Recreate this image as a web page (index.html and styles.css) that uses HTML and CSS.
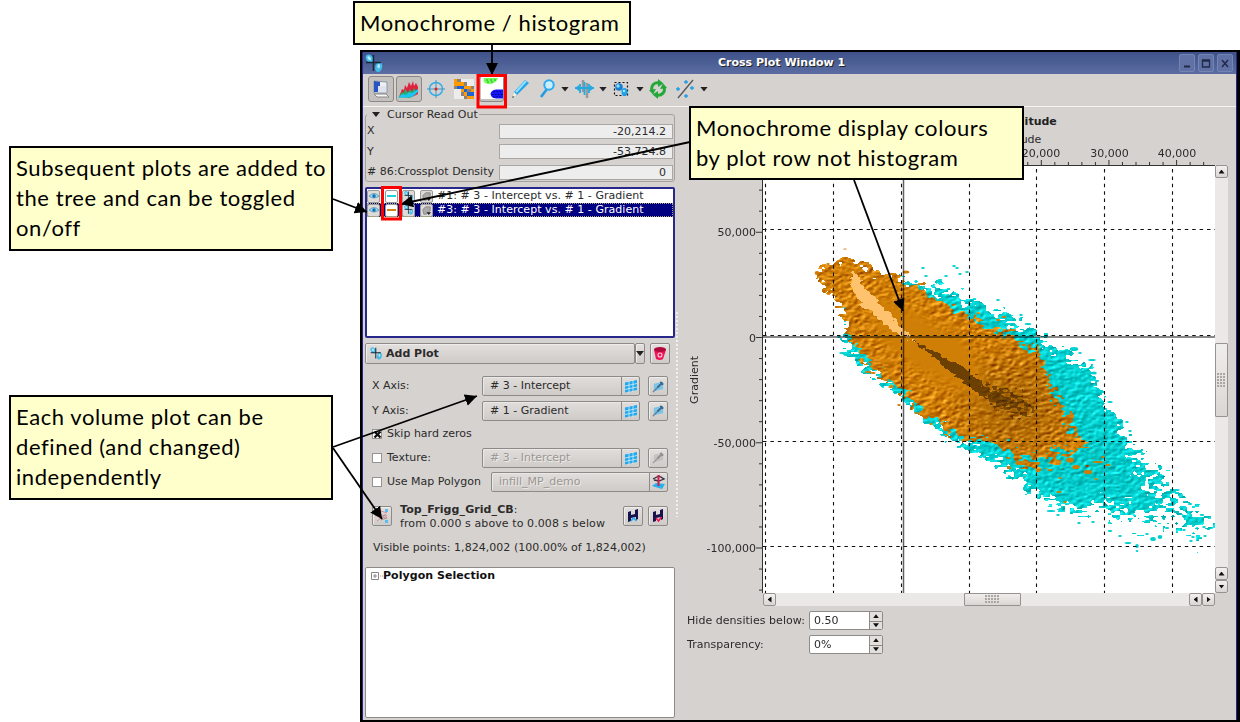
FILE: index.html
```html
<!DOCTYPE html>
<html lang="en">
<head>
<meta charset="utf-8">
<title>Cross Plot Window 1</title>
<link rel="stylesheet" href="styles.css">
</head>
<body>
<svg class="defs" width="0" height="0" aria-hidden="true">
  <symbol id="plotmark" viewBox="0 0 18 18">
    <ellipse cx="4.500" cy="4.500" rx="3.200" ry="4.600" fill="#45b9e8" transform="rotate(-40 4.500 4.500)"/>
    <ellipse cx="13" cy="12.500" rx="3.300" ry="4.800" fill="#45b9e8" transform="rotate(15 13 12.500)"/>
    <ellipse cx="4" cy="4" rx="1.300" ry="2.200" fill="#b8ecff" transform="rotate(-40 4 4)"/>
    <ellipse cx="13" cy="11.500" rx="1.200" ry="2" fill="#b8ecff"/>
    <path d="M8 1v15M1 8h14" stroke="#142838" stroke-width="1.400"/>
  </symbol>
  <symbol id="grid" viewBox="0 0 14 14">
    <path d="M1 3.500 13 1v10L1 13.500z" fill="#20a8f0"/>
    <path d="M5 2v12M9 1v12M1 7l12-2.500M1 10.500l12-2.500" stroke="#d6ecf5" stroke-width=".8"/>
  </symbol>
  <symbol id="edit" viewBox="0 0 14 14">
    <path d="M2 4 12 2v8L2 12z" fill="#7cc4e6"/>
    <path d="M1 13 7 7" stroke="#587890" stroke-width="1.200"/>
    <path d="m6 8 5-5M9 2l3 3" stroke="#38648a" stroke-width="2"/>
  </symbol>
  <symbol id="disk" viewBox="0 0 14 14">
    <path d="M2 3 5 2v4l4-1V1l3-1v10l-2 1V8L5 9v3l-3 1z" fill="#15124f"/>
  </symbol>
  <symbol id="eye" viewBox="0 0 12 10">
    <path d="M1 5q5-5 10 0-5 4-10 0z" fill="#8ed8f8" stroke="#5b93b0" stroke-width=".8"/>
    <circle cx="6" cy="5" r="1.700" fill="#1070b0"/>
  </symbol>
  <symbol id="tag" viewBox="0 0 12 12">
    <path d="m2 5 3-3h5v4l-4 4H3z" fill="#aaa" stroke="#888"/>
    <path d="m6 8h5l-2.500 3z" fill="#222"/>
  </symbol>
</svg>
<main class="slide">
  <section class="window">
    <header class="titlebar">
      <svg class="title-icon" width="19" height="19"><use href="#plotmark"/></svg>
      <h1>Cross Plot Window 1</h1>
      <div class="winbtns">
        <span><svg width="16" height="17"><path d="M5 11.500h6" stroke="#202a48" stroke-width="2"/></svg></span>
        <span><svg width="16" height="17"><path d="M4.500 5h7v7h-7zM4.500 6h7" fill="none" stroke="#202a48" stroke-width="1.300"/></svg></span>
        <span><svg width="16" height="17"><path d="m5 5 6 7M11 5l-6 7" stroke="#202a48" stroke-width="1.500"/></svg></span>
      </div>
    </header>

    <nav class="toolbar">
      <span class="tool pressed"><svg width="24" height="24"><path d="m5 4 13 1v11H5z" fill="#eef0f6" stroke="#8c94a8"/><path d="m5 4 6 1v10H5z" fill="#2854c4"/><path d="M9 9h8v6H9z" fill="#dfe3ee"/><path d="M5 17h12l3 3H8z" fill="#f8f8f8" stroke="#8a8a8a"/></svg></span>
      <span class="tool pressed t2"><svg width="24" height="24"><path d="m2 20 3-8 2 1 1-5 2 3 2-6 2 4 2-5 1 5 2-3 2 4v7l-6 3z" fill="#e0223f"/><path d="m2 20 3-5 2 1 1-4 3 4 2-4 2 3 2-4 2 3v3l-6 4z" fill="#19b76a"/><path d="m1 21 4-4 4 1 3-3 3 1 6-4v3l-6 5z" fill="#1cc4f0"/></svg></span>
      <span class="tool t3"><svg width="20" height="20"><circle cx="10" cy="10" r="6.500" fill="none" stroke="#35aee8" stroke-width="1.500"/><path d="M10 1v18M1 10h18" stroke="#3c96c4" stroke-width="1"/><circle cx="10" cy="10" r="1.500" fill="#e02020"/></svg></span>
      <span class="tool t4"><svg width="20" height="20" viewBox="0 0 6 6" shape-rendering="crispEdges"><path fill="#ececec" d="M0 0h6v6H0z"/><path fill="#8c8078" d="M1 0h1v1H1zM3 1h1v1H3zM5 2h1v1H5zM0 2h1v1H0zM2 4h1v1H2zM4 3h1v1H4zM3 5h1v1H3z"/><path fill="#ff9a00" d="M0 0h1v2H0zM1 1h2v1H1zM3 2h2v1H3zM2 3h1v1H2zM3 4h1v1H3zM4 5h2v1H4zM5 3h1v1H5z"/><path fill="#1d63d8" d="M1 2h2v1H1zM3 3h1v1H3zM4 4h2v1H4z"/></svg></span>
      <span class="tool pressed t5"><svg width="23" height="24"><path fill="#fff" d="M1 0h22v22H1z"/><path d="M4 1h14q-2 6-10 6Q2 6 4 1z" fill="#72ff58"/><path d="M6 3h2m2 0h2m2 0h2M7 5h2m2 0h2" stroke="#28a828"/><path d="M10.500 17q.500-4 5.500-4.500h7v9h-7q-5-.500-5.500-4.500z" fill="#1414ff"/><path d="M13.500 14.500h9M12 17.500h11M13.500 20h9" stroke="#000060" stroke-dasharray="1.300 1.700" stroke-width="1.200"/></svg></span>
      <span class="tool t6"><svg width="18" height="20"><path d="m1 19 2-6L14 1l4 3L6 16z" fill="#26a4e8"/><path d="m5 13 10-11" stroke="#94e0ff" stroke-width="2"/><path d="m1 19 2-6 3 3z" fill="#fff0d8"/><path d="m1 19 1-2 1 1z" fill="#222"/></svg></span>
      <span class="tool t7"><svg width="18" height="20"><path d="M3 18 9 10" stroke="#249be2" stroke-width="2.600"/><circle cx="11" cy="6" r="4.700" fill="#cceefa" stroke="#2caaf0" stroke-width="2"/></svg></span>
      <i class="drop d1"></i>
      <span class="tool t8"><svg width="19" height="20"><path d="M8 1v12M12 4v15" stroke="#999" stroke-width="2.500"/><path d="M0 9h19M5 5v9M14 5v9M9.500 3v13" stroke="#26a9df" stroke-width="1.800"/><path d="m0 9 4-3v6zM19 9l-4-3v6z" fill="#26a9df"/></svg></span>
      <i class="drop d2"></i>
      <span class="tool t9"><svg width="17" height="18"><path d="M1.500 2.500h13v13h-13z" fill="none" stroke="#111" stroke-width="1.200" stroke-dasharray="2 2"/><circle cx="6" cy="7" r="3.800" fill="#1b7fd0"/><circle cx="5" cy="6" r="1.700" fill="#92dcff"/><ellipse cx="11.500" cy="12" rx="3" ry="4" fill="#1fa2ea"/><circle cx="11" cy="11" r="1.200" fill="#a6e7ff"/></svg></span>
      <i class="drop d3"></i>
      <span class="tool t10"><svg width="18" height="20"><path d="M3.500 13C1 7 5 3 10 4M14.500 7c3 6-2 10-7 9" fill="none" stroke="#25a83a" stroke-width="3"/><path d="m0 11 7-1-3 5.500zM18 9l-7 1 3-5.500zM9 0l5.500 4.500L9 8zM9 20l-5.500-4.500L9 12z" fill="#25a83a"/></svg></span>
      <span class="tool t11"><svg width="21" height="20"><path d="M2 19 17 1" stroke="#555" stroke-width="1.300"/><path d="M8 3h4M10 1v4M14 9h4M16 7v4M8 17h4M10 15v4M0 10h4M2 8v4" stroke="#209ce8" stroke-width="1.300"/></svg></span>
      <i class="drop d4"></i>
    </nav>

    <div class="body">
      <section class="side">
        <fieldset class="readout">
          <legend><i class="drop"></i>Cursor Read Out</legend>
          <label>X<output>-20,214.2</output></label>
          <label>Y<output>-53,724.8</output></label>
          <label># 86:Crossplot Density<output>0</output></label>
        </fieldset>

        <ul class="tree">
          <li><b class="chip"><svg width="12" height="10"><use href="#eye"/></svg></b><b class="chip swatch cyan"></b><b class="chip"><svg width="10" height="10"><use href="#plotmark"/></svg></b><b class="chip"><svg width="11" height="11"><use href="#tag"/></svg></b><span>#1: # 3 - Intercept vs. # 1 - Gradient</span></li>
          <li class="selected"><b class="chip"><svg width="12" height="10"><use href="#eye"/></svg></b><b class="chip swatch orange"></b><b class="chip"><svg width="10" height="10"><use href="#plotmark"/></svg></b><b class="chip"><svg width="11" height="11"><use href="#tag"/></svg></b><span>#3: # 3 - Intercept vs. # 1 - Gradient</span></li>
        </ul>

        <div class="addrow">
          <button class="btn add"><svg width="13" height="13"><use href="#plotmark"/></svg>Add Plot</button>
          <button class="btn more"><i class="drop"></i></button>
          <button class="btn trash"><svg width="14" height="15"><path d="m1 4 2 9q4 2 7 0l3-9z" fill="#ee1456"/><ellipse cx="7" cy="3.500" rx="6" ry="2.500" fill="#b00a3c"/><circle cx="7" cy="9" r="2" fill="none" stroke="#ffd0e0" stroke-width="1.100"/></svg></button>
        </div>

        <div class="form">
          <div class="row"><span class="lbl">X Axis:</span><div class="combo"><span># 3 - Intercept</span><i><svg width="14" height="14"><use href="#grid"/></svg></i></div><button class="btn sq"><svg width="13" height="13"><use href="#edit"/></svg></button></div>
          <div class="row"><span class="lbl">Y Axis:</span><div class="combo"><span># 1 - Gradient</span><i><svg width="14" height="14"><use href="#grid"/></svg></i></div><button class="btn sq"><svg width="13" height="13"><use href="#edit"/></svg></button></div>
          <div class="row skip"><i class="check on"><svg width="9" height="9"><path d="m1.500 1.500 6 6M7.500 1.500l-6 6" stroke="#111" stroke-width="2.400"/></svg></i><span>Skip hard zeros</span></div>
          <div class="row texture"><i class="check"></i><span class="lbl2">Texture:</span><div class="combo off"><span># 3 - Intercept</span><i><svg width="14" height="14"><use href="#grid"/></svg></i></div><button class="btn sq gray"><svg width="13" height="13"><use href="#edit"/></svg></button></div>
          <div class="row"><i class="check"></i><span class="lbl2">Use Map Polygon</span><div class="combo off wide"><span>infill_MP_demo</span><i><svg width="16" height="16"><path d="m1 12 4-3 9 1-3 5z" fill="#22b2ef"/><path d="m2 5 6-3 5 3-5 2-5-1" fill="none" stroke="#303040" stroke-width="1.300"/><path d="M7.500 1v11" stroke="#dd1748" stroke-width="2"/></svg></i></div></div>
        </div>

        <div class="horizon">
          <button class="btn sq"><svg width="16" height="16"><path d="m2 4 5-1 6 2M1 8l6-1 6 1M3 13l4-3 6-1" stroke="#e08a94" fill="none"/><path d="m7 10 5-4M7 12l6-2" stroke="#888" stroke-width=".8"/><path d="M11 1h3v3h-3zM11 12h3v3h-3z" fill="#5bbcf4"/></svg></button>
          <p><strong>Top_Frigg_Grid_CB</strong>:<br>from 0.000 s above to 0.008 s below</p>
          <button class="btn sq"><svg width="14" height="14"><use href="#disk"/><path d="m5 12 2.500-3 3 3" stroke="#25aef5" stroke-width="1.600" fill="none"/></svg></button>
          <button class="btn sq"><svg width="14" height="14"><use href="#disk"/><path d="m5 9 2.500 3 3-4" stroke="#ea1550" stroke-width="1.600" fill="none"/></svg></button>
        </div>
        <p class="points">Visible points: 1,824,002 (100.00% of 1,824,002)</p>
        <div class="polygons"><svg width="14" height="9"><path d="M.5.5h7v7h-7zM2 4h4M4 2v4" fill="none" stroke="#888"/><path d="M9 4h4" stroke="#999" stroke-dasharray="1 1"/></svg><strong>Polygon Selection</strong></div>
      </section>
      <div class="grip"></div>

      <section class="plot">
        <div class="plot-head"><strong>Amplitude</strong><span>Amplitude</span></div>
        <div class="plot-grid">
          <div class="ytitle"><span>Gradient</span></div>
          <svg class="chart" width="512" height="446" id="chart"></svg>
          <div class="vscroll"><b class="sb up"></b><b class="thumb"></b><b class="sb up"></b><b class="sb down"></b></div>
          <div class="hscroll"><b class="sb left"></b><b class="thumb"></b><b class="sb left"></b><b class="sb right"></b></div>
        </div>
        <div class="spin"><span>Hide densities below:</span><div class="spinbox">0.50<i><b class="up"></b><b class="down"></b></i></div></div>
        <div class="spin"><span>Transparency:</span><div class="spinbox">0%<i><b class="up"></b><b class="down"></b></i></div></div>
      </section>
    </div>
  </section>

  <svg class="arrows" width="1240" height="722">
    <defs><marker id="head" markerUnits="userSpaceOnUse" markerWidth="14" markerHeight="14" refX="12" refY="6" orient="auto"><path d="M0 0 12 6 0 12z"/></marker></defs>
    <g stroke="#000" stroke-width="1.800" fill="none">
      <path d="M492 44V75" marker-end="url(#head)"/>
      <path d="M690 142 401 204" marker-end="url(#head)"/>
      <path d="M854 180 903 311" marker-end="url(#head)"/>
      <path d="M333 199 367 212" marker-end="url(#head)"/>
      <path d="M333 447 477 396" marker-end="url(#head)"/>
      <path d="M333 448 382 519" marker-end="url(#head)"/>
    </g>
    <g fill="none" stroke="#f00" stroke-width="3"><path d="M478 75.500h27.500v31.500H478z"/><path d="M382.500 187.500h18v31.500h-18z"/></g>
  </svg>
  <aside class="callout c1">Monochrome / histogram</aside>
  <aside class="callout c2">Subsequent plots are added to<br>the tree and can be toggled<br>on/off</aside>
  <aside class="callout c3">Each volume plot can be<br>defined (and changed)<br>independently</aside>
  <aside class="callout c4">Monochrome display colours<br>by plot row not histogram</aside>
</main>
<script src="plot.js"></script>
</body>
</html>
```
FILE: styles.css
```css
* { box-sizing: border-box; }
body { margin: 0; background: #fff; font: 11px/14px "DejaVu Sans", sans-serif; color: #2b2b2b; }
h1, p, ul { margin: 0; padding: 0; }
i, b.chip { font-style: normal; }
svg { display: block; flex: none; }
.defs { position: absolute; }
.slide { position: relative; width: 1240px; height: 722px; overflow: hidden; padding: 50px 0 0 360px; }
.window { width: 880px; height: 672px; border: 2px solid #000; border-right-width: 3px; display: flex; flex-direction: column; background: #d6d2cf; box-shadow: inset 1px 0 #28288c, inset -1px 0 #28288c; padding: 0 1px; }

.titlebar { height: 22px; flex: none; background: linear-gradient(#3e5289, #5b6da2); display: flex; align-items: center; padding: 0 3px 0 2px; }
.titlebar h1 { flex: 1; font-size: 11px; line-height: 20px; color: #fff; text-shadow: 1px 1px #222; padding-left: 334px; white-space: nowrap; }
.winbtns { display: flex; gap: 3px; }
.winbtns span { width: 16px; height: 18px; border: 1px solid #7485b3; border-radius: 2px; background: #6072a5; display: flex; justify-content: center; }

.toolbar { height: 33px; flex: none; display: flex; align-items: center; padding: 0 0 2px 5px; border-bottom: 1px solid #f5f4f3; }
.tool { display: flex; justify-content: center; align-items: center; }
.pressed { width: 26px; height: 26px; border: 1px solid #8c8885; border-radius: 3px; background: #c5c1be; }
.t2 { margin-left: 2px; } .t3 { margin-left: 4px; } .t4 { margin-left: 8px; }
.t5 { margin-left: 5px; width: 25px; } .t6 { margin-left: 7px; } .t7 { margin-left: 9px; }
.drop { width: 8px; height: 5px; background: #222; clip-path: polygon(0 0, 100% 0, 50% 100%); flex: none; }
.d1 { margin-left: 5px; } .t8 { margin-left: 6px; } .d2 { margin-left: 5px; } .t9 { margin-left: 6px; }
.d3 { margin-left: 6px; } .t10 { margin-left: 5px; } .t11 { margin-left: 9px; } .d4 { margin-left: 3px; }

.body { display: flex; flex: 1; min-height: 0; }
.side { width: 310px; margin-left: 2px; padding-top: 1px; display: flex; flex-direction: column; }
.readout { height: 74px; margin: 0; padding: 1px 1px 0; border: 1px solid #a5a19e; border-radius: 3px; min-width: 0; }
.readout legend { display: flex; align-items: center; gap: 7px; padding: 0 1px 0 5px; height: 13px; margin: 0; }
.readout label { display: flex; justify-content: space-between; align-items: center; height: 20.5px; white-space: nowrap; padding-bottom: 2px; }
.readout output { width: 174px; height: 15px; flex: none; border: 1px solid #aaa6a3; background: #ededed; text-align: right; line-height: 14px; padding-right: 6px; }
.tree { height: 151px; margin-top: 5px; border: 2px solid #28288c; padding-top: 0; background: #fff; list-style: none; border-radius: 2px; }
.tree li { height: 14px; display: flex; align-items: center; gap: 4.500px; }
.tree li span { margin-left: 0; white-space: nowrap; letter-spacing: .04px; }
.tree .selected { background: #000080; color: #fff; outline: 1px dotted #a8a870; outline-offset: -1px; }
.chip { width: 13px; height: 13px; flex: none; border: 1px solid #999; border-radius: 2px; background: #dedbd8; display: flex; align-items: center; justify-content: center; }
.swatch { background: #fff; }
.swatch::before { content: ""; width: 9px; height: 2px; background: #1bd5d8; }
.swatch.orange::before { background: #d28314; }

.btn { font: inherit; color: inherit; margin: 0; padding: 0; border: 1px solid #8e8a87; border-radius: 2px; background: linear-gradient(#e2dfdd, #cfcbc8); display: flex; align-items: center; justify-content: center; box-shadow: inset 1px 1px #efedeb; flex: none; }
.addrow { display: flex; height: 21px; margin-top: 5px; }
.add { width: 270px; justify-content: flex-start; gap: 3px; padding-left: 4px; font-weight: bold; }
.more { width: 10px; }
.trash { width: 20px; margin-left: 5px; }
.form { padding: 12px 7px 0; display: flex; flex-direction: column; }
.row { height: 20px; margin-bottom: 4.500px; display: flex; align-items: center; }
.lbl { width: 110px; }
.combo { width: 158px; height: 20px; border: 1px solid #8e8a87; border-radius: 2px; background: linear-gradient(#e0dddb, #cfcbc8); display: flex; box-shadow: inset 1px 1px #ebe9e7; }
.combo span { flex: 1; padding-left: 7px; line-height: 18px; white-space: nowrap; }
.combo i { width: 18px; border-left: 1px solid #8e8a87; display: flex; align-items: center; justify-content: center; }
.combo.off span { color: #9b9794; text-shadow: 1px 1px #eeecea; }
.combo.wide { width: 177px; margin-left: 9px; }
.sq { width: 20px; height: 20px; }
.combo + .sq { margin-left: 8px; }
.gray svg { filter: grayscale(1); opacity: .6; }
.skip { height: 18px; }
.texture { margin-bottom: 4px; }
.check { width: 10px; height: 10px; flex: none; border: 1px solid #96928f; background: #fff; margin-right: 5px; display: flex; }
.lbl2 { width: 95px; white-space: nowrap; }
.horizon { display: flex; padding: 0 7px; align-items: flex-start; margin-top: 6.5px; height: 28px; }
.horizon .sq { margin-top: 3px; }
.horizon p { width: 223px; padding-left: 8px; white-space: nowrap; letter-spacing: .09px; }
.horizon .sq + .sq { margin-left: 5px; }
.horizon p + .sq { margin-left: 8px; }
.points { margin: 10px 8px 0; white-space: nowrap; letter-spacing: .04px; }
.polygons { height: 151px; margin-top: 12px; border: 1px solid #8e8a87; background: #fff; border-radius: 2px; display: flex; align-items: flex-start; padding: 1px 0 0 5px; }
.polygons svg { margin: 3px 0 0; }
.polygons strong { color: #111; margin-left: -2px; letter-spacing: .05px; }
.grip { width: 3px; height: 205px; margin: 205px 0 0 1px; background: radial-gradient(circle at 1px 1px, #f2f0ef .8px, #d6d2cf 1.200px) 0 0 / 4px 4px; }

.plot { margin-left: 8px; width: 546px; }
.plot-head { height: 40px; padding: 8px 0 0 306px; display: flex; flex-direction: column; }
.plot-head strong { width: 60px; color: #222; line-height: 14px; }
.plot-head span { line-height: 22px; width: 60px; margin-left: -8px; }
.plot-grid { display: grid; grid-template-columns: 16px 512px 13px; grid-template-rows: 446px 13px; }
.ytitle { display: flex; align-items: center; justify-content: center; }
.ytitle span { writing-mode: vertical-rl; transform: rotate(180deg); padding-bottom: 16px; margin-top: 4px; }
.chart { height: 446px; overflow: hidden; font-size: 11px; fill: #2b2b2b; }
.vscroll { margin-top: 18px; background: #ebe9e7; display: flex; flex-direction: column; }
.hscroll { grid-column: 2; margin-left: 60px; background: #ebe9e7; display: flex; }
.sb { width: 13px; height: 13px; border: 1px solid #96928f; border-radius: 2px; background: linear-gradient(#f3f1f0, #d9d5d2); display: flex; align-items: center; justify-content: center; flex: none; }
.sb::before { content: ""; width: 6px; height: 4px; background: #111; }
.up::before { clip-path: polygon(50% 0, 100% 100%, 0 100%); }
.down::before { clip-path: polygon(0 0, 100% 0, 50% 100%); }
.sb.left::before, .sb.right::before { width: 4px; height: 6px; }
.left::before { clip-path: polygon(0 50%, 100% 0, 100% 100%); }
.right::before { clip-path: polygon(0 0, 100% 50%, 0 100%); }
.thumb { border: 1px solid #96928f; border-radius: 1px; background: linear-gradient(#f0eeec, #dad6d3); display: flex; align-items: center; justify-content: center; }
.thumb::before { content: ""; background: radial-gradient(circle at 1px 1px, #aaa6a3 .8px, transparent 1px) 0 0 / 3px 3px; }
.vscroll .thumb { height: 74px; margin: 165px 0 150px; }
.vscroll .thumb::before { width: 9px; height: 15px; }
.hscroll .thumb { width: 57px; flex: none; height: 13px; margin: 0 168px 0 188px; }
.hscroll .thumb::before { width: 15px; height: 9px; }
.spin { display: flex; align-items: center; height: 19px; margin-top: 5px; }
.spin > span { width: 122px; white-space: nowrap; letter-spacing: .04px; }
.spinbox { width: 74px; height: 19px; border: 1px solid #8e8a87; border-radius: 2px; background: #fff; display: flex; justify-content: space-between; padding-left: 4px; line-height: 18px; }
.spinbox i { width: 13px; background: #e2dfdc; border-left: 1px solid #8e8a87; display: grid; grid-template-rows: 1fr 1fr; }
.spinbox b { display: flex; align-items: center; justify-content: center; }
.spinbox b + b { border-top: 1px solid #8e8a87; }
.spinbox b::before { content: ""; width: 6px; height: 4px; background: #111; }

.arrows { position: absolute; left: 0; top: 0; }
.callout { position: absolute; border: 2px solid #000; background: #ffffcc; color: #000; font: 22px/30px Lato, sans-serif; letter-spacing: .58px; white-space: nowrap; padding: 5px; }
.c1 { left: 353px; top: 1px; width: 278px; height: 44px; }
.c2 { left: 9px; top: 146px; width: 324px; height: 105px; }
.c3 { left: 9px; top: 395px; width: 324px; height: 105px; }
.c4 { left: 689px; top: 106px; width: 335px; height: 74px; }
```
FILE: plot.js
```js
// Chart origin in page coordinates; all plot geometry below uses page units.
const OX = 703, OY = 147, X0 = 763, Y0 = 166, W = 452, H = 427;
const svg = document.getElementById('chart');
const NS = 'http://www.w3.org/2000/svg';
function el(name, attrs, text) {
  const e = document.createElementNS(NS, name);
  for (const k in attrs) e.setAttribute(k, attrs[k]);
  if (text) e.textContent = text;
  svg.appendChild(e);
  return e;
}
svg.setAttribute('viewBox', `${OX} ${OY} 512 446`);
el('rect', { x: X0, y: Y0, width: W, height: H, fill: '#fff' });

const fo = el('foreignObject', { x: X0, y: Y0, width: W, height: H });
const canvas = document.createElement('canvas');
canvas.width = W; canvas.height = H; canvas.style.display = 'block';
fo.appendChild(canvas);

function hash(x, y, s) {
  let h = Math.imul(x, 374761393) ^ Math.imul(y, 668265263) ^ Math.imul(s, 1274126177);
  h = Math.imul(h ^ (h >>> 13), 1103515245);
  h ^= h >>> 16;
  return (h >>> 0) / 4294967295;
}
function noise(x, y, s) {
  const a = Math.floor(x), b = Math.floor(y);
  let u = x - a, v = y - b;
  u = u * u * (3 - 2 * u); v = v * v * (3 - 2 * v);
  return (hash(a, b, s) * (1 - u) + hash(a + 1, b, s) * u) * (1 - v)
    + (hash(a, b + 1, s) * (1 - u) + hash(a + 1, b + 1, s) * u) * v - 0.5;
}
const clamp = t => Math.max(0, Math.min(1, t));
function dist(p, x, y) {
  let inside = false, best = 1e9;
  for (let i = 0, j = p.length - 1; i < p.length; j = i++) {
    const [ax, ay] = p[i], [bx, by] = p[j];
    if ((ay > y) !== (by > y) && x < (bx - ax) * (y - ay) / (by - ay) + ax) inside = !inside;
    const dx = bx - ax, dy = by - ay;
    const t = clamp(((x - ax) * dx + (y - ay) * dy) / (dx * dx + dy * dy));
    best = Math.min(best, Math.hypot(x - ax - t * dx, y - ay - t * dy));
  }
  return inside ? best : -best;
}
const orange = [[820,273],[825,267],[836,266],[840,258],[850,256],[856,260],[868,267],[877,275],[890,275],[903,279],[908,285],[925,290],[942,301],[960,308],[975,319],[990,329],[1005,336],[1020,344],[1032,352],[1043,364],[1048,375],[1055,395],[1066,412],[1074,428],[1078,440],[1083,447],[1078,452],[1070,453],[1055,454],[1040,459],[1025,460],[1010,452],[995,444],[980,440],[965,438],[952,432],[945,428],[935,420],[920,409],[907,397],[893,387],[885,379],[870,363],[858,350],[850,338],[847,325],[842,308],[832,297],[825,290]];
const cyan = [[900,280],[920,286],[935,287],[950,292],[965,300],[975,303],[990,311],[1005,316],[1020,326],[1040,335],[1055,346],[1070,355],[1085,369],[1095,386],[1103,402],[1112,415],[1122,428],[1130,447],[1143,458],[1152,473],[1163,486],[1176,498],[1190,512],[1200,522],[1196,528],[1180,520],[1165,512],[1155,517],[1140,516],[1125,516],[1110,509],[1090,508],[1078,513],[1060,504],[1048,499],[1035,494],[1020,479],[1005,467],[985,457],[968,447],[950,438],[920,414],[900,395],[880,378],[866,366],[852,353],[845,340],[846,320],[852,300]];
const core = [[868,290],[890,292],[915,304],[940,318],[965,330],[982,352],[990,374],[996,398],[990,410],[965,402],[940,388],[905,372],[880,350],[868,325]];
const light = [[852,270],[859,277],[863,285],[870,294],[879,302],[891,314],[900,325],[909,335],[918,341],[914,342],[904,337],[892,330],[876,317],[861,306],[856,295],[849,284]];
const dark = [[908,335],[920,343],[931,349],[942,355],[958,364],[970,370],[985,384],[1004,392],[1020,398],[1030,407],[1014,411],[995,405],[976,393],[958,378],[942,366],[930,354],[918,346]];

const ctx = canvas.getContext('2d');
const img = ctx.createImageData(W, H);
const relief = (x, y) => .7 * noise((x + y * .45) / 4.6, (y + x * .15) / 2.8, 4) + .65 * noise((x + y * .4) / 2.8, y / 1.8, 6);
for (let py = 0; py < H; py++) {
  for (let px = 0; px < W; px++) {
    const x = px + X0, y = py + Y0;
    if (x < 810 || y < 240 || y > 555) continue;
    const n = noise(x / 4.2, y / 2.6, 1) * 14 + noise(x / 9, y / 6, 2) * 9;
    const n2 = noise(x / 4.2, y / 2.4, 11) * 16 + noise(x / 9, y / 6, 12) * 8;
    const dO = dist(orange, x, y), dC = dist(cyan, x, y);
    const south = clamp((y - 425) / 35) * clamp((x - 985) / 30);
    const east = clamp((x - 920) / 40) * clamp((y - 290) / 30);
    const tail = clamp((x - 1085) / 50) * clamp((y - 440) / 35);
    const inO = dO + n * (.85 + south * 1.2 + east * .3) > 0;
    const inC = dC + n2 * (1.1 + tail * 1.5) - tail * 3 > 0;
    if (!inO && !inC) continue;
    let s = relief(x + 1, y + 1) - relief(x - 1, y - 1);
    let c;
    if (inO) {
      s *= clamp(.9 - dist(core, x, y) / 18);
      c = [207 + s * 76, 126 + s * 76, 6 + s * 55];
      const jag = noise(x / 3.5, y / 2, 8) * 5;
      if (dist(light, x, y) + jag > .7) c = [255, 194, 110];
      // The ridge's shadow breaks up into specks toward the dense corner.
      const far = clamp((x - 960) / 60);
      if (dist(dark, x, y) + jag * (.7 + far * 3.6) > .6) c = [108 + s * 55, 64 + s * 45, 3];
      else if (dist(core, x, y) < 10) {
        const fade = clamp(1 - Math.hypot(x - 1015, (y - 405) * 1.1) / 75);
        const k = 1 - fade * .2;
        c = [c[0] * k, c[1] * k, c[2] * k];
      }
    } else {
      const depth = clamp((dC - 5) / 30);
      c = [4 + s * 40, 208 - depth * 6 + s * 68, 208 - depth * 6 + s * 68];
    }
    const i = (py * W + px) * 4;
    img.data[i] = c[0]; img.data[i + 1] = c[1]; img.data[i + 2] = c[2]; img.data[i + 3] = 255;
  }
}
ctx.putImageData(img, 0, 0);
function dots(color, list) {
  ctx.fillStyle = color;
  for (const [x, y, w = 3, h = 2] of list) {
    ctx.beginPath(); ctx.ellipse(x - X0, y - Y0, w / 2 + .3, h / 2 + .1, 0, 0, 7); ctx.fill();
  }
}
dots('#00cfcf', [[923,268],[954,266],[957,268],[960,274],[967,272],[946,276],[940,280,4],[926,276],[998,300],[1021,315],[1028,324,6],[1074,349,8,4],[1080,353],[1092,360,7],[1094,373,5,3],[1097,381,4,2],[1110,402,5],[1127,422],[1130,431],[1176,490,7],[1190,504,4],[1202,515,4],[1204,527,3],[1205,536],[1193,537],[1191,541],[1184,530],[1167,528,4],[1160,537,4,4],[1153,539,5,4],[1147,534],[1137,546,3,4],[1137,551,2],[1128,543,6],[1120,536],[1110,531,4],[1093,522],[1079,523],[1058,515],[1051,511,8],[842,353,5],[848,355,8],[855,348,5],[867,370,6],[839,337],[880,377]]);
dots('#d07c02', [[817,273,4,4],[845,249,3,1],[828,264],[829,287,6],[834,295,4],[906,272,6,3],[898,276],[868,372,6],[873,373,5],[886,380,5],[891,387,5],[899,405],[916,413],[931,424],[1059,492,5],[1065,502,3],[1088,472,8,4],[1096,479],[1103,457],[1108,465,5],[1076,467,7,4],[1060,478],[1098,462,10],[1080,444,8,4],[1070,460,7,5],[1050,470,5],[1020,463,9,4],[1004,317,4],[998,320,4],[1012,330,8],[1024,345,5]]);

const grid = { stroke: '#111', 'stroke-width': 1.1, 'stroke-dasharray': '3.500 3.900', fill: 'none' };
for (const x of [765.5, 833.5, 901.5, 969.5, 1036.5, 1104.5, 1172.5]) el('path', { d: `M${x} 169V593`, ...grid });
for (const y of [229.5, 335.5, 441.5, 546.5]) el('path', { d: `M763 ${y}H1215`, ...grid });
el('path', { d: 'M903.5 166V593M763 337H1215', stroke: '#000', 'stroke-opacity': .62, 'stroke-width': 1.5 });
let d = 'M762.500 165.500V593M762.500 165.500H1215';
for (let i = -7; i <= 12; i++) {
  const y = 337.5 + i * 21.05;
  if (y > 166 && y < 593) d += `M${i % 5 ? 759 : 756} ${y}H762`;
}
for (let i = -20; i < 24; i++) {
  const x = 906 + i * 13.53;
  if (x > 763 && x < 1209) d += `M${x} ${i % 5 ? 162 : 160}V165`;
}
el('path', { d, stroke: '#333', fill: 'none' });
for (const [t, y] of [['50,000', 236], ['0', 341.5], ['-50,000', 447], ['-100,000', 552]]) el('text', { x: 756, y, 'text-anchor': 'end' }, t);
for (const [t, x] of [['20,000', 1041], ['30,000', 1109.5], ['40,000', 1177]]) el('text', { x, y: 157, 'text-anchor': 'middle' }, t);
```
